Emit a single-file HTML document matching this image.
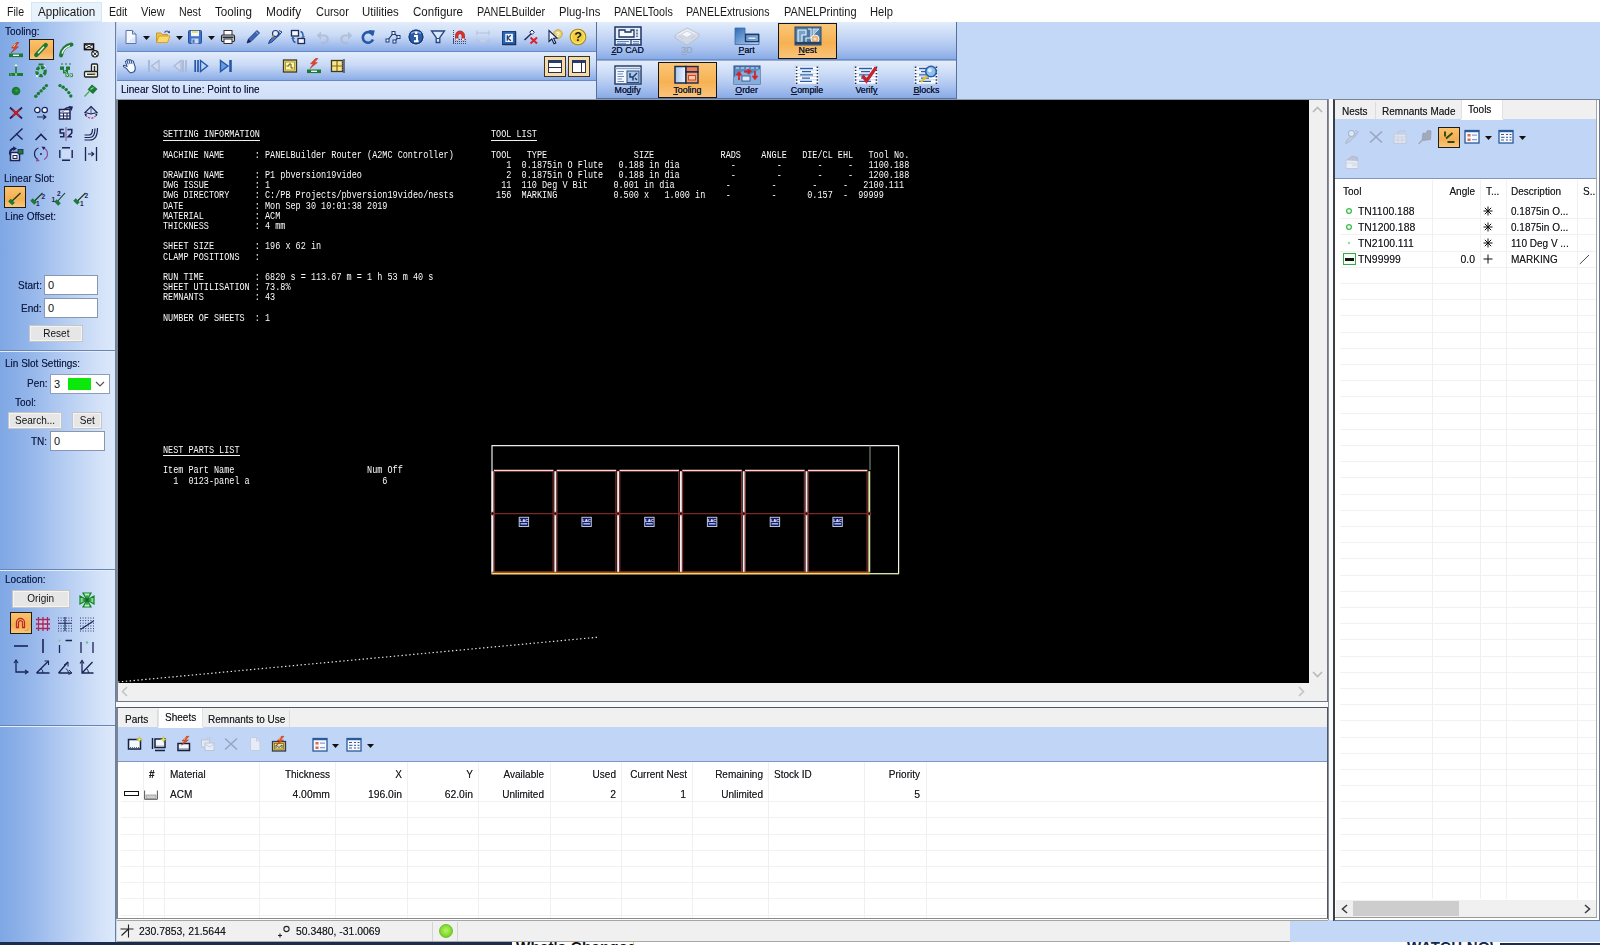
<!DOCTYPE html>
<html lang="en">
<head>
<meta charset="utf-8">
<title>PANELBuilder - Nest Tooling</title>
<style>
*{box-sizing:border-box;margin:0;padding:0}
html,body{width:1600px;height:945px;overflow:hidden}
body{position:relative;background:#c3d7f7;font-family:"Liberation Sans",sans-serif;font-size:11px;color:#0a0a0a}
.abs{position:absolute}
#menu{position:absolute;left:0;top:0;width:1600px;height:22px;background:#fff}
#menu span{position:absolute;transform-origin:0 50%;top:5.3px;font-size:12.2px;line-height:15px;color:#1a1a1a;white-space:nowrap}
#menu .hl{position:absolute;left:31px;top:2px;width:71px;height:20px;background:#e8f2fb;border:1px solid #d3e7f8}
#left{position:absolute;left:0;top:22px;width:116px;height:920px;background:linear-gradient(90deg,#7ea7e4 0%,#93b5ea 25%,#b4ccf2 55%,#d2e1f8 85%,#dde9fb 100%);border-right:1px solid #6d7f9f}
#left .hr{position:absolute;left:0;width:115px;height:2px;background:#6784b4;border-bottom:1px solid #e4edfb}
.lbl{position:absolute;font-size:11px;line-height:13px;color:#0d1b45;white-space:nowrap}
.tbrow{position:absolute;left:117px;width:480px;background:linear-gradient(180deg,#e2ecfb 0%,#cbdbf6 45%,#a3beed 80%,#8aace6 100%);border-bottom:1px solid #6688c4}
#canvas{position:absolute;left:118px;top:100px;width:1191px;height:583px;background:#000}
pre.cad{position:absolute;font-family:"Liberation Mono",monospace;font-size:10.5px;line-height:10.19px;color:#fafafa;white-space:pre;transform:scaleX(.8095);transform-origin:0 0}
.ul{position:absolute;height:1px;background:#f0f0f0}
.btn{position:absolute;background:#e6e6e6;border:1px solid #c6c6c6;text-align:center;font-size:11px;line-height:14px;color:#111;box-shadow:inset 0 0 0 1px #f4f4f4}
.inp{position:absolute;background:#fff;border:1px solid #8797b2;font-size:11px;line-height:18px;padding-left:3px;color:#111}
.sel{position:absolute;border:1px solid #1c1c1c;background:linear-gradient(180deg,#fbc36b,#f5ae52 60%,#f9c77c)}
.tabbar{position:absolute;background:#f0f0f0}
.tab{position:absolute;font-size:11px;line-height:13px;color:#1a1a1a;white-space:nowrap}
.grid{position:absolute;background:#fff}
.th,.td{position:absolute;font-size:11px;line-height:13px;color:#1a1a1a;white-space:nowrap}
.lbl,.tab,.th,.td{text-shadow:0 0 .4px rgba(10,15,40,.55);transform:scaleX(.91);transform-origin:0 50%}
.r{text-align:right;transform-origin:100% 50%}
.n{transform:scaleX(.945)}
.btn span{display:inline-block;transform:scaleX(.91)}
u{text-decoration:underline;text-underline-offset:1px}
svg{position:absolute;overflow:visible}
</style>
</head>
<body>
<div id="menu">
<div class="hl"></div>
<span style="left:7px;transform:scaleX(0.867)">File</span>
<span style="left:37.5px;transform:scaleX(0.960)">Application</span>
<span style="left:108.5px;transform:scaleX(0.871)">Edit</span>
<span style="left:141px;transform:scaleX(0.901)">View</span>
<span style="left:178.5px;transform:scaleX(0.873)">Nest</span>
<span style="left:215px;transform:scaleX(0.956)">Tooling</span>
<span style="left:266px;transform:scaleX(0.978)">Modify</span>
<span style="left:315.5px;transform:scaleX(0.896)">Cursor</span>
<span style="left:361.5px;transform:scaleX(0.936)">Utilities</span>
<span style="left:413px;transform:scaleX(0.945)">Configure</span>
<span style="left:476.5px;transform:scaleX(0.886)">PANELBuilder</span>
<span style="left:558.5px;transform:scaleX(0.924)">Plug-Ins</span>
<span style="left:613.5px;transform:scaleX(0.883)">PANELTools</span>
<span style="left:686px;transform:scaleX(0.870)">PANELExtrusions</span>
<span style="left:783.5px;transform:scaleX(0.902)">PANELPrinting</span>
<span style="left:870px;transform:scaleX(0.916)">Help</span>
</div>
<div id="left">
<div class="hr" style="top:328px"></div>
<div class="hr" style="top:547px"></div>
<div class="hr" style="top:703px"></div>
<div class="lbl" style="left:5px;top:3px">Tooling:</div>
<div class="sel" style="left:29px;top:17px;width:25px;height:21px"></div>
<div class="lbl" style="left:4px;top:150px">Linear Slot:</div>
<div class="sel" style="left:4px;top:164px;width:22px;height:22px"></div>
<div class="lbl" style="left:5px;top:188px">Line Offset:</div>
<div class="lbl" style="left:18px;top:257px">Start:</div>
<div class="inp" style="left:44px;top:253px;width:54px;height:20px">0</div>
<div class="lbl" style="left:21px;top:280px">End:</div>
<div class="inp" style="left:44px;top:276px;width:54px;height:20px">0</div>
<div class="btn" style="left:29px;top:303px;width:54px;height:17px"><span>Reset</span></div>
<div class="lbl" style="left:5px;top:335px">Lin Slot Settings:</div>
<div class="lbl" style="left:27px;top:355px">Pen:</div>
<div class="inp" style="left:50px;top:352px;width:60px;height:20px;border-color:#8e9db8">3<i class="abs" style="left:17px;top:3px;width:23px;height:12px;background:#0ce80c"></i>
<svg style="left:44px;top:6px" width="10" height="6" viewBox="0 0 10 6"><path d="M1 1 L5 5 L9 1" fill="none" stroke="#555" stroke-width="1.2"/></svg></div>
<div class="lbl" style="left:15px;top:374px">Tool:</div>
<div class="btn" style="left:8px;top:390px;width:54px;height:17px"><span>Search...</span></div>
<div class="btn" style="left:72px;top:390px;width:30px;height:17px"><span>Set</span></div>
<div class="lbl" style="left:31px;top:413px">TN:</div>
<div class="inp" style="left:50px;top:409px;width:55px;height:20px">0</div>
<div class="lbl" style="left:5px;top:551px">Location:</div>
<div class="btn" style="left:12px;top:568px;width:58px;height:18px"><span>Origin</span></div>
<div class="sel" style="left:10px;top:590px;width:22px;height:22px"></div>
</div>
<div class="tbrow" style="top:22px;height:30px"></div>
<div class="tbrow" style="top:52px;height:29px"></div>
<div class="abs" style="left:117px;top:81px;width:480px;height:19px;background:linear-gradient(180deg,#dbe6fa,#cfdef8)"></div>
<div class="lbl" style="left:121px;top:83px;font-size:11px;color:#0d1538">Linear Slot to Line: Point to line</div>
<div id="rtb" class="abs" style="left:596px;top:22px;width:361px;height:77px;border-left:1px solid #56709e;border-right:1px solid #56709e;border-bottom:1px solid #56709e;background:linear-gradient(180deg,#e2ecfb 0,#c9daf6 13px,#a6c0ee 28px,#88abe6 37px,#4f6fa8 38px,#e2ecfb 39px,#cbdbf6 52px,#a6c0ee 66px,#88abe6 76px)"></div>
<div class="abs" style="left:116px;top:99px;width:1212px;height:603px;background:#f0f0f0;border:1px solid #6f7788;border-top-color:#8f98aa;border-left:2px solid #7b8494"></div>
<div id="canvas"></div>
<svg style="left:1312px;top:106px" width="11" height="7" viewBox="0 0 11 7"><path d="M1 6 L5.5 1.5 L10 6" fill="none" stroke="#b9b9b9" stroke-width="1.6"/></svg>
<svg style="left:1312px;top:671px" width="11" height="7" viewBox="0 0 11 7"><path d="M1 1 L5.5 5.5 L10 1" fill="none" stroke="#b9b9b9" stroke-width="1.6"/></svg>
<svg style="left:121px;top:686px" width="7" height="11" viewBox="0 0 7 11"><path d="M6 1 L1.5 5.5 L6 10" fill="none" stroke="#c4c4c4" stroke-width="1.6"/></svg>
<svg style="left:1298px;top:686px" width="7" height="11" viewBox="0 0 7 11"><path d="M1 1 L5.5 5.5 L1 10" fill="none" stroke="#c4c4c4" stroke-width="1.6"/></svg>
<div class="abs" style="left:116px;top:702px;width:1212px;height:5px;background:#fafafa"></div>
<div class="abs" style="left:1328px;top:99px;width:6px;height:821px;background:#fafafa;border-left:1px solid #8a8f9a"></div>
<pre class="cad" style="left:163.1px;top:129.3px">SETTING INFORMATION

MACHINE NAME      : PANELBuilder Router (A2MC Controller)

DRAWING NAME      : P1 pbversion19video
DWG ISSUE         : 1
DWG DIRECTORY     : C:/PB Projects/pbversion19video/nests
DATE              : Mon Sep 30 10:01:38 2019
MATERIAL          : ACM
THICKNESS         : 4 mm

SHEET SIZE        : 196 x 62 in
CLAMP POSITIONS   :

RUN TIME          : 6820 s = 113.67 m = 1 h 53 m 40 s
SHEET UTILISATION : 73.8%
REMNANTS          : 43

NUMBER OF SHEETS  : 1












NEST PARTS LIST

Item Part Name                          Num Off
  1  0123-panel a                          6</pre>
<pre class="cad" style="left:491.2px;top:129.3px">TOOL LIST

TOOL   TYPE                 SIZE             RADS    ANGLE   DIE/CL EHL   Tool No.
   1  0.1875in O Flute   0.188 in dia          -        -       -     -   1100.188
   2  0.1875in O Flute   0.188 in dia          -        -       -     -   1200.188
  11  110 Deg V Bit     0.001 in dia          -        -       -     -   2100.111
 156  MARKING           0.500 x   1.000 in    -        -      0.157  -  99999</pre>
<div class="ul" style="left:163px;top:140px;width:97px"></div>
<div class="ul" style="left:491px;top:140px;width:46px"></div>
<div class="ul" style="left:163px;top:455px;width:77px"></div>
<svg style="left:118px;top:100px" width="1191" height="583" viewBox="118 100 1191 583">
<path d="M118 682 L598 637.2" stroke="#e8e8e8" stroke-width="1.2" stroke-dasharray="1.4 2.5" fill="none"/>
<path d="M492 573.5 V445.6 H898.6" stroke="#ececec" stroke-width="1.2" fill="none"/>
<path d="M898.6 445.6 V573.8" stroke="#f3f6dc" stroke-width="1.2" fill="none"/>
<path d="M870 445.6 V470" stroke="#7f8f7f" stroke-width="1.1" fill="none"/>
<rect x="494.2" y="471.4" width="58.9" height="100.6" fill="none" stroke="#8b3030" stroke-width="1.1"/>
<path d="M493.9 470.3 H553.4" stroke="#f1dcdc" stroke-width="1.3"/>
<rect x="557.0" y="471.4" width="58.9" height="100.6" fill="none" stroke="#8b3030" stroke-width="1.1"/>
<path d="M556.7 470.3 H616.2" stroke="#f1dcdc" stroke-width="1.3"/>
<rect x="619.8" y="471.4" width="58.9" height="100.6" fill="none" stroke="#8b3030" stroke-width="1.1"/>
<path d="M619.5 470.3 H679.0" stroke="#f1dcdc" stroke-width="1.3"/>
<rect x="682.6" y="471.4" width="58.9" height="100.6" fill="none" stroke="#8b3030" stroke-width="1.1"/>
<path d="M682.3 470.3 H741.8" stroke="#f1dcdc" stroke-width="1.3"/>
<rect x="745.4" y="471.4" width="58.9" height="100.6" fill="none" stroke="#8b3030" stroke-width="1.1"/>
<path d="M745.1 470.3 H804.6" stroke="#f1dcdc" stroke-width="1.3"/>
<rect x="808.2" y="471.4" width="58.9" height="100.6" fill="none" stroke="#8b3030" stroke-width="1.1"/>
<path d="M807.9 470.3 H867.4" stroke="#f1dcdc" stroke-width="1.3"/>
<path d="M492 513.6 H870" stroke="#7c2626" stroke-width="1.3"/>
<path d="M492.5 471.2 V572.4" stroke="#f6eeee" stroke-width="1.9"/>
<circle cx="492.5" cy="513.6" r="1.5" fill="#140404" stroke="#a83c3c" stroke-width=".8"/>
<path d="M555.3 471.2 V572.4" stroke="#f6eeee" stroke-width="1.9"/>
<circle cx="555.3" cy="513.6" r="1.5" fill="#140404" stroke="#a83c3c" stroke-width=".8"/>
<path d="M618.1 471.2 V572.4" stroke="#f6eeee" stroke-width="1.9"/>
<circle cx="618.1" cy="513.6" r="1.5" fill="#140404" stroke="#a83c3c" stroke-width=".8"/>
<path d="M680.9 471.2 V572.4" stroke="#f6eeee" stroke-width="1.9"/>
<circle cx="680.9" cy="513.6" r="1.5" fill="#140404" stroke="#a83c3c" stroke-width=".8"/>
<path d="M743.7 471.2 V572.4" stroke="#f6eeee" stroke-width="1.9"/>
<circle cx="743.7" cy="513.6" r="1.5" fill="#140404" stroke="#a83c3c" stroke-width=".8"/>
<path d="M806.5 471.2 V572.4" stroke="#f6eeee" stroke-width="1.9"/>
<circle cx="806.5" cy="513.6" r="1.5" fill="#140404" stroke="#a83c3c" stroke-width=".8"/>
<path d="M869.3 471.2 V572.4" stroke="#e4ecae" stroke-width="1.9"/>
<circle cx="869.3" cy="513.6" r="1.5" fill="#140404" stroke="#a83c3c" stroke-width=".8"/>
<path d="M491.5 572.3 H870" stroke="#b9601c" stroke-width="1"/>
<path d="M491.5 573.7 H870" stroke="#f6d673" stroke-width="1.5"/>
<path d="M870 573.7 H899" stroke="#e6efb0" stroke-width="1.3"/>
<rect x="519.2" y="517.3" width="9.4" height="9.2" fill="#0f1a70" stroke="#b9c6d2" stroke-width="1"/>
<text x="523.9" y="522" font-family="Liberation Sans,sans-serif" font-size="4.2" font-weight="bold" fill="#fff" text-anchor="middle">LAC</text>
<rect x="520.6" y="523.3" width="6.6" height="1.1" fill="#e8eefc"/>
<rect x="581.9" y="517.3" width="9.4" height="9.2" fill="#0f1a70" stroke="#b9c6d2" stroke-width="1"/>
<text x="586.6" y="522" font-family="Liberation Sans,sans-serif" font-size="4.2" font-weight="bold" fill="#fff" text-anchor="middle">LAC</text>
<rect x="583.4" y="523.3" width="6.6" height="1.1" fill="#e8eefc"/>
<rect x="644.7" y="517.3" width="9.4" height="9.2" fill="#0f1a70" stroke="#b9c6d2" stroke-width="1"/>
<text x="649.4" y="522" font-family="Liberation Sans,sans-serif" font-size="4.2" font-weight="bold" fill="#fff" text-anchor="middle">LAC</text>
<rect x="646.1" y="523.3" width="6.6" height="1.1" fill="#e8eefc"/>
<rect x="707.4" y="517.3" width="9.4" height="9.2" fill="#0f1a70" stroke="#b9c6d2" stroke-width="1"/>
<text x="712.1" y="522" font-family="Liberation Sans,sans-serif" font-size="4.2" font-weight="bold" fill="#fff" text-anchor="middle">LAC</text>
<rect x="708.9" y="523.3" width="6.6" height="1.1" fill="#e8eefc"/>
<rect x="770.2" y="517.3" width="9.4" height="9.2" fill="#0f1a70" stroke="#b9c6d2" stroke-width="1"/>
<text x="774.9" y="522" font-family="Liberation Sans,sans-serif" font-size="4.2" font-weight="bold" fill="#fff" text-anchor="middle">LAC</text>
<rect x="771.6" y="523.3" width="6.6" height="1.1" fill="#e8eefc"/>
<rect x="832.9" y="517.3" width="9.4" height="9.2" fill="#0f1a70" stroke="#b9c6d2" stroke-width="1"/>
<text x="837.6" y="522" font-family="Liberation Sans,sans-serif" font-size="4.2" font-weight="bold" fill="#fff" text-anchor="middle">LAC</text>
<rect x="834.4" y="523.3" width="6.6" height="1.1" fill="#e8eefc"/>
</svg>
<div class="abs" style="left:1333px;top:99px;width:267px;height:822px;background:#fff;border:1px solid #6a7a9a;border-top-color:#7c8494;border-left:2px solid #3b3f4a"></div>
<div class="tabbar" style="left:1335px;top:100px;width:262px;height:19px"></div>
<div class="abs" style="left:1375px;top:102px;width:1px;height:17px;background:#dcdcdc"></div>
<div class="abs" style="left:1461px;top:100px;width:42px;height:20px;background:#fff;border-left:1px solid #e2e2e2;border-right:1px solid #e2e2e2"></div>
<div class="tab" style="left:1342px;top:105px">Nests</div>
<div class="tab" style="left:1382px;top:105px">Remnants Made</div>
<div class="tab" style="left:1468px;top:103px">Tools</div>
<div class="abs" style="left:1335px;top:119px;width:262px;height:60px;background:#c1d5f7;border-bottom:1px solid #7f96c0"></div>
<div class="abs" style="left:1461px;top:119px;width:42px;height:1px;background:#fff"></div>
<div class="sel" style="left:1438px;top:127px;width:22px;height:21px"></div>
<div class="grid" id="rgrid" style="left:1336px;top:180px;width:261px;height:719px;
background-image:linear-gradient(#f0f0f0,#f0f0f0),linear-gradient(#f0f0f0,#f0f0f0),linear-gradient(#f0f0f0,#f0f0f0),linear-gradient(#f0f0f0,#f0f0f0),repeating-linear-gradient(180deg,transparent 0,transparent 15.2px,#f1f1f1 15.2px,#f1f1f1 16.2px);
background-size:1px 100%,1px 100%,1px 100%,1px 100%,256px 100%;
background-position:96px 0,144px 0,170px 0,241px 0,4px 22.6px;background-repeat:no-repeat"></div>
<div class="th" style="left:1343px;top:185px">Tool</div>
<div class="th r" style="left:1435px;top:185px;width:40px">Angle</div>
<div class="th" style="left:1486px;top:185px">T...</div>
<div class="th" style="left:1511px;top:185px">Description</div>
<div class="th" style="left:1583px;top:185px">S..</div>
<div class="td n" style="left:1358px;top:205px">TN1100.188</div>
<div class="td n" style="left:1358px;top:221px">TN1200.188</div>
<div class="td n" style="left:1358px;top:237px">TN2100.111</div>
<div class="td n" style="left:1358px;top:253px">TN99999</div>
<div class="td r n" style="left:1435px;top:253px;width:40px">0.0</div>
<div class="td" style="left:1511px;top:205px">0.1875in O...</div>
<div class="td" style="left:1511px;top:221px">0.1875in O...</div>
<div class="td" style="left:1511px;top:237px">110 Deg V ...</div>
<div class="td" style="left:1511px;top:253px">MARKING</div>
<div class="abs" style="left:1336px;top:900px;width:261px;height:17px;background:#f0f0f0"></div>
<div class="abs" style="left:1353px;top:901px;width:106px;height:15px;background:#cdcdcd"></div>
<svg style="left:1341px;top:903.5px" width="7" height="10" viewBox="0 0 7 10"><path d="M6 1 L1.5 5 L6 9" fill="none" stroke="#404040" stroke-width="1.6"/></svg>
<svg style="left:1584px;top:903.5px" width="7" height="10" viewBox="0 0 7 10"><path d="M1 1 L5.5 5 L1 9" fill="none" stroke="#404040" stroke-width="1.6"/></svg>
<div class="abs" style="left:1335px;top:100px;width:262px;height:818px;border-right:1px solid #a6a6a6;border-bottom:1px solid #9a9a9a"></div>
<div class="abs" style="left:116px;top:707px;width:1212px;height:212px;background:#fff;border:1px solid #4f5666;border-left:2px solid #7b8494;border-bottom:1px solid #8a8a8a"></div>
<div class="tabbar" style="left:118px;top:708px;width:1209px;height:19px"></div>
<div class="abs" style="left:157px;top:710px;width:1px;height:17px;background:#dcdcdc"></div>
<div class="abs" style="left:158px;top:708px;width:45px;height:20px;background:#fff;border-left:1px solid #e2e2e2;border-right:1px solid #e2e2e2"></div>
<div class="abs" style="left:289px;top:710px;width:1px;height:17px;background:#dcdcdc"></div>
<div class="tab" style="left:125px;top:713px">Parts</div>
<div class="tab" style="left:165px;top:711px">Sheets</div>
<div class="tab" style="left:207.5px;top:713px">Remnants to Use</div>
<div class="abs" style="left:118px;top:727px;width:1209px;height:35px;background:#c1d5f7;border-bottom:1px solid #7f96c0"></div>
<div class="abs" style="left:158px;top:727px;width:45px;height:1px;background:#fff"></div>
<div class="grid" id="bgrid" style="left:118px;top:762px;width:1209px;height:156px;
background-image:linear-gradient(#f0f0f0,#f0f0f0),linear-gradient(#f0f0f0,#f0f0f0),linear-gradient(#f0f0f0,#f0f0f0),linear-gradient(#f0f0f0,#f0f0f0),linear-gradient(#f0f0f0,#f0f0f0),linear-gradient(#f0f0f0,#f0f0f0),linear-gradient(#f0f0f0,#f0f0f0),linear-gradient(#f0f0f0,#f0f0f0),linear-gradient(#f0f0f0,#f0f0f0),linear-gradient(#f0f0f0,#f0f0f0),linear-gradient(#f0f0f0,#f0f0f0),linear-gradient(#f0f0f0,#f0f0f0),repeating-linear-gradient(180deg,transparent 0,transparent 15.2px,#f1f1f1 15.2px,#f1f1f1 16.2px);
background-size:1px 100%,1px 100%,1px 100%,1px 100%,1px 100%,1px 100%,1px 100%,1px 100%,1px 100%,1px 100%,1px 100%,1px 100%,1205px 100%;
background-position:25px 0,46px 0,141px 0,217px 0,289px 0,360px 0,432px 0,503px 0,574px 0,650px 0,746px 0,808px 0,3px 23.6px;background-repeat:no-repeat"></div>
<div class="th" style="left:149px;top:768px;font-weight:bold">#</div>
<div class="th" style="left:169.5px;top:768px">Material</div>
<div class="th r" style="left:270px;top:768px;width:60px">Thickness</div>
<div class="th r" style="left:372px;top:768px;width:30px">X</div>
<div class="th r" style="left:443px;top:768px;width:30px">Y</div>
<div class="th r" style="left:484px;top:768px;width:60px">Available</div>
<div class="th r" style="left:575.5px;top:768px;width:40px">Used</div>
<div class="th r" style="left:617px;top:768px;width:70px">Current Nest</div>
<div class="th r" style="left:703px;top:768px;width:60px">Remaining</div>
<div class="th" style="left:774px;top:768px">Stock ID</div>
<div class="th r" style="left:860px;top:768px;width:60px">Priority</div>
<div class="td" style="left:169.5px;top:788px">ACM</div>
<div class="td r n" style="left:270px;top:788px;width:60px">4.00mm</div>
<div class="td r n" style="left:342px;top:788px;width:60px">196.0in</div>
<div class="td r n" style="left:413px;top:788px;width:60px">62.0in</div>
<div class="td r" style="left:484px;top:788px;width:60px">Unlimited</div>
<div class="td r n" style="left:575.5px;top:788px;width:40px">2</div>
<div class="td r n" style="left:646px;top:788px;width:40px">1</div>
<div class="td r" style="left:703px;top:788px;width:60px">Unlimited</div>
<div class="td r n" style="left:880px;top:788px;width:40px">5</div>
<div class="abs" style="left:117px;top:919px;width:1211px;height:2px;background:#fdfdfd;border-bottom:1px solid #a6a6a6"></div>
<div class="abs" style="left:117px;top:921px;width:1173px;height:21px;background:#f0f0f0;border-bottom:1px solid #a9a9a9"></div>
<div class="abs" style="left:432px;top:922px;width:1px;height:19px;background:#d4d4d4"></div>
<div class="abs" style="left:457px;top:922px;width:1px;height:19px;background:#d4d4d4"></div>
<div class="td n" style="left:138.5px;top:925px">230.7853, 21.5644</div>
<div class="td n" style="left:295.5px;top:925px">50.3480, -31.0069</div>
<div class="abs" style="left:439px;top:924px;width:14px;height:14px;border-radius:50%;background:radial-gradient(circle at 50% 45%,#b9f06a 0,#8fe23c 45%,#58b81e 100%);border:1px solid #6fc22a"></div>
<div class="abs" style="left:0;top:942px;width:512px;height:3px;background:#1b2c4c"></div>
<div class="abs" style="left:512px;top:942px;width:1088px;height:3px;background:#fff"></div>
<div class="abs" style="left:1500px;top:942.6px;width:100px;height:3px;background:#1b2c4c"></div>
<div class="abs" style="left:516px;top:941.6px;width:118px;height:3.4px;overflow:hidden;background:#fff"><div style="font:bold 15px/15px 'Liberation Sans',sans-serif;color:#111;margin-top:-2.4px;white-space:nowrap;letter-spacing:.3px">What's Changed</div></div>
<div class="abs" style="left:1407px;top:941.6px;width:86px;height:3.4px;overflow:hidden;background:#fff"><div style="font:bold 15px/15px 'Liberation Sans',sans-serif;color:#14284a;margin-top:-2.4px;white-space:nowrap;letter-spacing:.3px">WATCH NOW</div></div>
<svg style="left:8.0px;top:41.5px" width="16" height="16" viewBox="0 0 16 16"><path d="M8.5 0.5 L3.5 6 L6.5 6 L3 11 L10.5 4.8 L7.3 4.8 L11 0.5 Z" fill="#e8442a" stroke="#b3261a" stroke-width=".5"/><path d="M7.5 2 L5.5 5" stroke="#ffd24a" stroke-width="1"/><rect x="1" y="11.5" width="14" height="3.6" fill="#1b7a33"/><rect x="5" y="12.6" width="6" height="1.4" fill="#e9fbe9"/></svg>
<svg style="left:33.0px;top:41.5px" width="16" height="16" viewBox="0 0 16 16"><path d="M3.2 13 L12.8 3" stroke="#1b7a33" stroke-width="4.2" stroke-linecap="round"/><path d="M5 11.2 L11 4.8" stroke="#fff6d8" stroke-width="1.4"/></svg>
<svg style="left:58.0px;top:41.5px" width="16" height="16" viewBox="0 0 16 16"><path d="M3 13.5 C3.5 8 7.5 3.5 13.5 2.5" stroke="#1b7a33" stroke-width="4" fill="none" stroke-linecap="round"/><path d="M4 11.5 C5 8 8 5 12 3.6" stroke="#f3fbf3" stroke-width="1.3" fill="none"/></svg>
<svg style="left:82.5px;top:41.5px" width="16" height="16" viewBox="0 0 16 16"><rect x="1.5" y="2" width="9" height="5.6" fill="#fff" stroke="#111" stroke-width="1.6"/><path d="M2 2.5 L10 7 M10 2.5 L2 7" stroke="#111" stroke-width=".9"/><circle cx="12" cy="11.8" r="3.2" fill="#fff" stroke="#111" stroke-width="1.1"/><path d="M10.2 10 L13.8 13.6 M13.8 10 L10.2 13.6" stroke="#111" stroke-width="1"/></svg>
<svg style="left:8.0px;top:62.5px" width="16" height="16" viewBox="0 0 16 16"><rect x="1" y="10" width="14" height="3" fill="#1b7a33"/><path d="M8 2 V12" stroke="#1b7a33" stroke-width="1.6"/><path d="M8 1 V4 M6.7 2.5 H9.3" stroke="#fff" stroke-width=".8"/><path d="M7.2 10.4 L8.8 12.6 M8.8 10.4 L7.2 12.6" stroke="#eaffea" stroke-width=".8"/><path d="M2.2 10.8 L3.8 12.4" stroke="#bfe8bf" stroke-width=".7"/></svg>
<svg style="left:33.0px;top:62.5px" width="16" height="16" viewBox="0 0 16 16"><circle cx="8" cy="8.5" r="4.2" fill="none" stroke="#1b7a33" stroke-width="3.2" stroke-dasharray="3.4 1.4"/><circle cx="8" cy="8.5" r="1.6" fill="#7fdc8c"/><path d="M3 12 L5 14 M5 12 L3 14 M11 2 L13 4" stroke="#eaffea" stroke-width=".8"/><rect x="5.5" y="0.5" width="5" height="2" fill="#1b7a33"/></svg>
<svg style="left:58.0px;top:62.5px" width="16" height="16" viewBox="0 0 16 16"><g fill="#1b7a33"><rect x="2" y="3.5" width="4" height="3.4"/><rect x="8" y="3.5" width="4" height="3.4"/><rect x="5" y="7" width="5" height="3.4"/><rect x="7.5" y="10.5" width="3.6" height="3.6"/><rect x="11.8" y="10.5" width="3.2" height="3.6"/></g><path d="M3 1 H5 M7 1 H9 M11 1 H13" stroke="#1b7a33" stroke-width="1"/><path d="M8.2 11 L10.4 13.6 M10.4 11 L8.2 13.6 M12.3 11 L14.3 13.6 M14.3 11 L12.3 13.6" stroke="#eaffea" stroke-width=".8"/><path d="M6 7.6 L9 9.8" stroke="#9fe6a8" stroke-width=".9"/></svg>
<svg style="left:82.5px;top:62.5px" width="16" height="16" viewBox="0 0 16 16"><rect x="8.5" y="1" width="6" height="8" rx="1" fill="#fdfdf0" stroke="#222" stroke-width="1.3"/><rect x="1.5" y="8.5" width="13" height="5.5" rx="1" fill="#fdfdf0" stroke="#222" stroke-width="1.3"/><path d="M11.5 3 V8" stroke="#333" stroke-width="1.5"/><path d="M4 11.3 H11.5" stroke="#333" stroke-width="1.4"/><circle cx="11.5" cy="11.3" r="1" fill="#7a6a20"/></svg>
<svg style="left:8.0px;top:83.0px" width="16" height="16" viewBox="0 0 16 16"><circle cx="8" cy="8" r="4.3" fill="#1b7a33"/><circle cx="8.6" cy="7.4" r="1.5" fill="#2f9a45"/></svg>
<svg style="left:33.0px;top:83.0px" width="16" height="16" viewBox="0 0 16 16"><g fill="#1b7a33"><circle cx="2.8" cy="13.2" r="1.7"/><circle cx="5.4" cy="10.5" r="1.7"/><circle cx="8.1" cy="7.9" r="1.7"/><circle cx="10.8" cy="5.2" r="1.7"/><circle cx="13.4" cy="2.6" r="1.7"/></g></svg>
<svg style="left:58.0px;top:83.0px" width="16" height="16" viewBox="0 0 16 16"><g fill="#1b7a33"><circle cx="2.0" cy="2.6" r="1.7"/><circle cx="5.2" cy="4.2" r="1.7"/><circle cx="8.2" cy="6.6" r="1.7"/><circle cx="10.8" cy="9.6" r="1.7"/><circle cx="12.8" cy="13.0" r="1.7"/></g></svg>
<svg style="left:82.5px;top:83.0px" width="16" height="16" viewBox="0 0 16 16"><path d="M9 1.5 L14.5 6 L10 11 L4.5 6.5 Z" fill="#1b7a33"/><path d="M7.5 6.5 L10.5 4.5" stroke="#8fe08f" stroke-width="1.2"/><path d="M6.2 8.5 L1.5 13.5" stroke="#3fae4a" stroke-width="1.2"/></svg>
<svg style="left:8.0px;top:105.0px" width="16" height="16" viewBox="0 0 16 16"><path d="M2 2.5 L14 13.5 M14 2.5 L2 13.5" stroke="#1b2455" stroke-width="1.7"/><path d="M4.5 4.8 L11.5 11.2 M11.5 4.8 L4.5 11.2" stroke="#c01f2a" stroke-width="1.9"/></svg>
<svg style="left:33.0px;top:105.0px" width="16" height="16" viewBox="0 0 16 16"><circle cx="4.3" cy="5" r="2.7" fill="#eef6ff" stroke="#1b2455" stroke-width="1.2"/><circle cx="11.7" cy="5" r="2.7" fill="#eef6ff" stroke="#1b2455" stroke-width="1.2"/><path d="M4 12 H12.5 M10 9.8 L12.8 12 L10 14.2" stroke="#1b2455" stroke-width="1.2" fill="none"/></svg>
<svg style="left:58.0px;top:105.0px" width="16" height="16" viewBox="0 0 16 16"><rect x="1.5" y="4.5" width="10.5" height="9.5" fill="#f4f7ff" stroke="#1b2455" stroke-width="1.5"/><path d="M2 8 H12 M2 11 H12 M5.5 8 V14 M9 8 V14" stroke="#1b2455" stroke-width="1.1"/><path d="M6 5 Q9 1.5 13 3" stroke="#1b2455" stroke-width="1.6" fill="none"/><path d="M10.5 1 L15 1.5 L13.5 6 Z" fill="#1b2455"/><path d="M3.5 6.2 L6 6.2" stroke="#8a90b0" stroke-width="1.2"/></svg>
<svg style="left:82.5px;top:105.0px" width="16" height="16" viewBox="0 0 16 16"><path d="M8 1.5 L14 7.5 L8 9 L2 7.5 Z" fill="none" stroke="#1b2455" stroke-width="1.1"/><path d="M8 1.5 V9" stroke="#1b2455" stroke-width=".7"/><path d="M2.5 10 Q8 16.5 13.5 10" stroke="#b04a7a" stroke-width="1.2" fill="none" stroke-dasharray="2.2 1.2"/><path d="M1.5 8.5 L4 9 L2.2 11.2 Z M14.5 8.5 L12 9 L13.8 11.2 Z" fill="#1b2455"/></svg>
<svg style="left:8.0px;top:125.5px" width="16" height="16" viewBox="0 0 16 16"><path d="M1.5 1.5 L8 7.5" stroke="#9aa3c8" stroke-width=".9"/><path d="M14.5 2.5 L2 14.5 M8 7.5 L14.5 13.5" stroke="#1b2455" stroke-width="1.4"/></svg>
<svg style="left:33.0px;top:125.5px" width="16" height="16" viewBox="0 0 16 16"><path d="M3.5 3 L8 8 L12.5 3" stroke="#9aa3c8" stroke-width=".9" fill="none"/><path d="M2.5 14 L8 8.5 L13.5 14" stroke="#1b2455" stroke-width="1.6" fill="none"/></svg>
<svg style="left:58.0px;top:125.5px" width="16" height="16" viewBox="0 0 16 16"><path d="M8 1 V15" stroke="#8a6aa0" stroke-width="1.2"/><path d="M5.8 3.5 H2.2 V7 H5.8 V10.8 H2" stroke="#1b2455" stroke-width="1.5" fill="none"/><path d="M10.2 4.4 V3.5 H13.8 V7 L10.2 10.8 H14" stroke="#1b2455" stroke-width="1.5" fill="none"/></svg>
<svg style="left:82.5px;top:125.5px" width="16" height="16" viewBox="0 0 16 16"><path d="M1.5 14 H7 Q14.5 14 14.5 2 M1.5 11.5 H6.5 Q12 11.5 12 2.5 M1.5 9 H6 Q9.5 9 9.5 3" stroke="#1b2455" stroke-width="1.15" fill="none"/></svg>
<svg style="left:8.0px;top:146.0px" width="16" height="16" viewBox="0 0 16 16"><rect x="2.5" y="6.5" width="9" height="8" fill="#f4f7ff" stroke="#1b2455" stroke-width="1.5"/><rect x="5" y="9.5" width="4" height="3" fill="none" stroke="#1b2455" stroke-width="1"/><path d="M2.5 9 Q0.5 4 6 2.2" stroke="#1b2455" stroke-width="2" fill="none"/><path d="M5 0.2 L9 2.4 L5.4 5 Z" fill="#1b2455"/><rect x="10" y="3.5" width="5" height="4.5" fill="#1b7a33" stroke="#1b2455" stroke-width=".8"/></svg>
<svg style="left:33.0px;top:146.0px" width="16" height="16" viewBox="0 0 16 16"><path d="M5.5 2 A6.3 6.3 0 0 0 5 13.5" stroke="#1b2455" stroke-width="1.2" fill="none"/><path d="M10.5 2 A6.3 6.3 0 0 1 11 13.5" stroke="#8a4a9a" stroke-width="1.2" fill="none"/><path d="M8.5 0.5 L12.5 1 L10.5 4 Z" fill="#1b2455"/><path d="M3.5 12 L7 15 L3 15.5 Z" fill="#8a4a9a"/><circle cx="8" cy="8" r="1" fill="#1b2455"/></svg>
<svg style="left:58.0px;top:146.0px" width="16" height="16" viewBox="0 0 16 16"><path d="M4 1.8 H12 M4 14.2 H12 M1.8 4 V12 M14.2 4 V12" stroke="#1b2455" stroke-width="1.4"/><rect x="3.5" y="3.5" width="9" height="9" fill="#dfe9fb" opacity=".55"/></svg>
<svg style="left:82.5px;top:146.0px" width="16" height="16" viewBox="0 0 16 16"><path d="M2.5 1 V15 M13.5 1 V15" stroke="#1b2455" stroke-width="1.3"/><path d="M5 8 H10.5 M8.3 5.8 L10.8 8 L8.3 10.2" stroke="#1b2455" stroke-width="1.1" fill="none"/></svg>
<svg style="left:7.0px;top:189.5px" width="16" height="16" viewBox="0 0 16 16"><path d="M3 13 L13.5 3" stroke="#173a1c" stroke-width="1.3"/><path d="M2.5 10 L6.5 14" stroke="#1b7a33" stroke-width="3.8"/></svg>
<svg style="left:30.0px;top:189.5px" width="16" height="16" viewBox="0 0 16 16"><path d="M3 12.5 L12.5 3" stroke="#173a1c" stroke-width="1.1"/><path d="M1.5 9.5 L5.5 13.5" stroke="#1b7a33" stroke-width="3.6"/><text x="6" y="15.5" font-family="Liberation Sans,sans-serif" font-size="6.5" font-weight="bold" fill="#1b2455">1</text><text x="11.5" y="8.5" font-family="Liberation Sans,sans-serif" font-size="6.5" font-weight="bold" fill="#1b2455">2</text></svg>
<svg style="left:51.0px;top:189.5px" width="16" height="16" viewBox="0 0 16 16"><path d="M5 13 L14 3" stroke="#173a1c" stroke-width="1.1"/><path d="M4.5 10.5 L8.5 14.5" stroke="#1b7a33" stroke-width="3.6"/><text x="0.5" y="12" font-family="Liberation Sans,sans-serif" font-size="6.5" font-weight="bold" fill="#1b2455">1</text><text x="6" y="5.5" font-family="Liberation Sans,sans-serif" font-size="6.5" font-weight="bold" fill="#1b2455">2</text></svg>
<svg style="left:73.0px;top:189.5px" width="16" height="16" viewBox="0 0 16 16"><path d="M3 12.5 L12.5 3" stroke="#173a1c" stroke-width="1.1"/><path d="M1.5 9.5 L5.5 13.5" stroke="#1b7a33" stroke-width="3.6"/><text x="7" y="15.5" font-family="Liberation Sans,sans-serif" font-size="6.5" font-weight="bold" fill="#1b2455">1</text><text x="11.5" y="8" font-family="Liberation Sans,sans-serif" font-size="6.5" font-weight="bold" fill="#1b2455">2</text></svg>
<svg style="left:78.0px;top:590.5px" width="18" height="18" viewBox="0 0 18 18"><path d="M9 9 L5 2 H13 Z M9 9 L5 16 H13 Z M9 9 L2 5 V13 Z M9 9 L16 5 V13 Z" fill="#7fe08a" stroke="#14802a" stroke-width="1.2"/><path d="M9 4.5 V13.5 M4.5 9 H13.5" stroke="#0d5a20" stroke-width="1"/><path d="M7 3.2 H11 M7 14.8 H11" stroke="#eaffea" stroke-width=".8"/></svg>
<svg style="left:13.0px;top:615.5px" width="16" height="16" viewBox="0 0 16 16"><path d="M3.5 11.5 V6.5 A4 4 0 0 1 11.5 6.5 V11.5 H9.6 V6.7 A2.1 2.1 0 0 0 5.4 6.7 V11.5 Z" fill="#f6d9a0" stroke="#c0281a" stroke-width="1.3"/><path d="M11.5 14.5 H15 V12" stroke="#c9a24a" stroke-width=".9" fill="none"/></svg>
<svg style="left:35.0px;top:615.5px" width="16" height="16" viewBox="0 0 16 16"><rect x="2" y="2" width="12" height="12" fill="#f3c9dc" opacity=".6"/><path d="M1 3.5 H15 M1 8 H15 M1 12.5 H15 M3.5 1 V15 M8 1 V15 M12.5 1 V15" stroke="#9a2a68" stroke-width="1.3"/></svg>
<svg style="left:57.0px;top:615.5px" width="16" height="16" viewBox="0 0 16 16"><g stroke="#2a3a70" stroke-width="1" stroke-dasharray="1 1.6"><path d="M1 2 H15 M1 4.6 H15 M1 10 H15 M1 12.6 H15 M1 15 H15"/></g><path d="M8 1 V15 M1 7.3 H15" stroke="#1b2455" stroke-width="1.1"/></svg>
<svg style="left:79.0px;top:615.5px" width="16" height="16" viewBox="0 0 16 16"><g stroke="#2a3a70" stroke-width="1" stroke-dasharray="1 1.6"><path d="M1 2 H15 M1 4.6 H15 M1 7.2 H15 M1 10 H15 M1 12.6 H15 M1 15 H15"/></g><path d="M1.5 13.5 L14.5 5" stroke="#1b2455" stroke-width="1.2"/></svg>
<svg style="left:13.0px;top:637.5px" width="16" height="16" viewBox="0 0 16 16"><path d="M1 8 H15" stroke="#1b2455" stroke-width="1.6"/></svg>
<svg style="left:35.0px;top:637.5px" width="16" height="16" viewBox="0 0 16 16"><path d="M8 1 V15" stroke="#1b2455" stroke-width="1.6"/></svg>
<svg style="left:57.0px;top:637.5px" width="16" height="16" viewBox="0 0 16 16"><path d="M8.5 2.5 H15 M2.5 7 V15" stroke="#1b2455" stroke-width="1.3"/><circle cx="2.5" cy="2.5" r="1" fill="#7fbf8f"/></svg>
<svg style="left:79.0px;top:637.5px" width="16" height="16" viewBox="0 0 16 16"><path d="M2 4 V15 M14 4 V15" stroke="#1b2455" stroke-width="1.3"/><circle cx="8" cy="4.5" r="1.2" fill="#6fbf9f"/></svg>
<svg style="left:13.0px;top:659.0px" width="16" height="16" viewBox="0 0 16 16"><path d="M3 1.5 V13 H14.5" stroke="#1b2455" stroke-width="1.3" fill="none"/><path d="M1 4 L3 1 L5 4 M12 11 L15 13 L12 15" stroke="#1b2455" stroke-width="1.1" fill="none"/></svg>
<svg style="left:35.0px;top:659.0px" width="16" height="16" viewBox="0 0 16 16"><path d="M1.5 14 H14.5 M1.5 14 L13 2.5" stroke="#1b2455" stroke-width="1.3" fill="none"/><path d="M9.5 2 H13.5 V6" stroke="#1b2455" stroke-width="1.1" fill="none"/><path d="M8 14 A6 6 0 0 0 6 9.5" stroke="#1b2455" stroke-width="1" fill="none"/></svg>
<svg style="left:57.0px;top:659.0px" width="16" height="16" viewBox="0 0 16 16"><path d="M1.5 14 H14.5 M1.5 14 L11 3" stroke="#1b2455" stroke-width="1.3" fill="none"/><path d="M9 9.5 A7 7 0 0 1 11.5 14" stroke="#1b2455" stroke-width="1" fill="none"/><path d="M12 11 L14.8 14 L11.5 15.5" stroke="#1b2455" stroke-width="1" fill="none"/><path d="M7 6 L11 3 L11 7.5" stroke="#1b2455" stroke-width="1" fill="none"/></svg>
<svg style="left:79.0px;top:659.0px" width="16" height="16" viewBox="0 0 16 16"><path d="M3 1.5 V14 H14.5 M3 14 L13.5 3" stroke="#1b2455" stroke-width="1.3" fill="none"/><path d="M1 4.5 L3 1.5 L5 4.5" stroke="#1b2455" stroke-width="1.1" fill="none"/><path d="M9.5 14 A6.5 6.5 0 0 0 7.7 9.6" stroke="#1b2455" stroke-width="1" fill="none"/></svg>
<svg style="left:122.5px;top:29.2px" width="16" height="16" viewBox="0 0 16 16"><path d="M3 1.5 H9.5 L13 5 V14.5 H3 Z" fill="#f4f8ff" stroke="#5a72a8" stroke-width="1"/><path d="M9.5 1.5 V5 H13" fill="#cfdcf5" stroke="#5a72a8" stroke-width="1"/><path d="M4 13.5 H12 V8 Z" fill="#dbe6fa"/></svg>
<svg style="left:143.0px;top:36.2px" width="7" height="4" viewBox="0 0 7 4"><path d="M0 0 H7 L3.5 4 Z" fill="#111"/></svg>
<svg style="left:154.5px;top:29.2px" width="16" height="16" viewBox="0 0 16 16"><path d="M1.5 13.5 V4 H6 L7.5 5.5 H12.5 V7" fill="#f0c24a" stroke="#c8962a" stroke-width="1"/><path d="M1.5 13.5 L4 7 H15 L12.5 13.5 Z" fill="#fbd96a" stroke="#d1a030" stroke-width="1"/><path d="M9.5 3.5 Q12 0.5 14 3.5" stroke="#2a4a90" stroke-width="1.2" fill="none"/><path d="M12.5 3.8 L15 4.2 L14.6 1.6 Z" fill="#2a4a90"/></svg>
<svg style="left:175.8px;top:36.2px" width="7" height="4" viewBox="0 0 7 4"><path d="M0 0 H7 L3.5 4 Z" fill="#111"/></svg>
<svg style="left:187.0px;top:29.2px" width="16" height="16" viewBox="0 0 16 16"><rect x="1.5" y="1.5" width="13" height="13" rx="1" fill="#3f73c8" stroke="#2a4f98" stroke-width="1"/><rect x="4" y="1.8" width="8" height="5.4" fill="#f3f6fc"/><rect x="5" y="2" width="6" height="2" fill="#e8e070"/><rect x="4.5" y="9.5" width="7" height="5" fill="#cdd9ee"/><rect x="5.5" y="10.5" width="2" height="3.4" fill="#3f73c8"/></svg>
<svg style="left:207.8px;top:36.2px" width="7" height="4" viewBox="0 0 7 4"><path d="M0 0 H7 L3.5 4 Z" fill="#111"/></svg>
<svg style="left:219.8px;top:29.2px" width="16" height="16" viewBox="0 0 16 16"><rect x="4" y="1.5" width="8" height="5" fill="#fff" stroke="#333" stroke-width="1"/><rect x="1.5" y="6" width="13" height="6.5" rx="1.2" fill="#d8dde8" stroke="#222" stroke-width="1.1"/><rect x="4" y="10" width="8" height="4.5" fill="#fff" stroke="#333" stroke-width="1"/><rect x="2.5" y="7.5" width="11" height="1.6" fill="#2a2f3a"/></svg>
<svg style="left:244.5px;top:29.2px" width="16" height="16" viewBox="0 0 16 16"><path d="M2 14 L3.5 10 L12 1.5 L14.5 4 L6 12.5 Z" fill="#3a68b8" stroke="#1d3a7a" stroke-width=".9"/><path d="M2 14 L3.5 10 L6 12.5 Z" fill="#1d2a4a"/><path d="M11 2.8 L13.3 5" stroke="#9ab8ea" stroke-width="1"/></svg>
<svg style="left:266.6px;top:29.2px" width="16" height="16" viewBox="0 0 16 16"><path d="M1.5 14.5 L3 11 L11.5 3 L13.5 5 L5 13 Z" fill="#4a78c8" stroke="#1d3a7a" stroke-width=".9"/><circle cx="8.5" cy="4.5" r="3" fill="#e4eefc" stroke="#1d3a7a" stroke-width="1.1"/><path d="M12 1.5 L15 3 L13 5" stroke="#1d3a7a" stroke-width="1" fill="none"/><path d="M4.5 8.5 L7 6.5" stroke="#d8a020" stroke-width="1.4"/></svg>
<svg style="left:290.2px;top:29.2px" width="16" height="16" viewBox="0 0 16 16"><rect x="1.5" y="1.5" width="7" height="5.5" fill="#f4f8ff" stroke="#1d2a5a" stroke-width="1.3"/><rect x="8" y="9.5" width="6.5" height="5" fill="#f4f8ff" stroke="#1d2a5a" stroke-width="1.3"/><path d="M10.5 2.5 Q13.5 3.5 13 7.5" stroke="#2a5aa8" stroke-width="1.4" fill="none"/><path d="M11 8 L13.2 9.2 L15 6.8 Z" fill="#2a5aa8"/><path d="M5.5 13.5 Q2.5 12.5 3 9" stroke="#2a5aa8" stroke-width="1.4" fill="none"/><path d="M1 9.8 L3 7.5 L5 9.8 Z" fill="#2a5aa8"/></svg>
<svg style="left:315.4px;top:29.2px" width="16" height="16" viewBox="0 0 16 16" opacity=".75"><path d="M4 6.5 H9.5 A3.8 3.8 0 0 1 9.5 14 H6" stroke="#aeb8cc" stroke-width="2.2" fill="none"/><path d="M1.5 6.5 L6 2.5 V10.5 Z" fill="#aeb8cc"/></svg>
<svg style="left:338.3px;top:29.2px" width="16" height="16" viewBox="0 0 16 16" opacity=".75"><path d="M12 6.5 H6.5 A3.8 3.8 0 0 0 6.5 14 H10" stroke="#aeb8cc" stroke-width="2.2" fill="none"/><path d="M14.5 6.5 L10 2.5 V10.5 Z" fill="#aeb8cc"/></svg>
<svg style="left:360.0px;top:29.2px" width="16" height="16" viewBox="0 0 16 16"><path d="M12.8 6 A5.3 5.3 0 1 0 13 10.5" stroke="#2458a8" stroke-width="2.6" fill="none"/><path d="M8.5 1 L14.8 1.5 L13 7.5 Z" fill="#2458a8"/></svg>
<svg style="left:384.5px;top:29.2px" width="16" height="16" viewBox="0 0 16 16"><path d="M2.5 11.5 L8.5 4 L13.5 8 L9.5 12.5" stroke="#1d2a5a" stroke-width="1.1" fill="none"/><g fill="#eef4ff" stroke="#1d3a7a" stroke-width="1"><rect x="1" y="10" width="3" height="3"/><rect x="7" y="2.5" width="3" height="3"/><rect x="12" y="6.5" width="3" height="3"/><rect x="8" y="11" width="3" height="3"/></g></svg>
<svg style="left:406.8px;top:28.2px" width="18" height="18" viewBox="0 0 18 18"><circle cx="9" cy="9" r="8" fill="#2a5aa8" stroke="#d4dff2" stroke-width="1"/><circle cx="9" cy="9" r="6.9" fill="none" stroke="#183a78" stroke-width="1.2"/><path d="M4 5.5 Q9 1.8 14 5.5" stroke="#8fb0e6" stroke-width="1.3" fill="none"/><path d="M7 8 H10 V13.3 H11.6 M7 13.3 H11.6" stroke="#fff" stroke-width="1.9" fill="none"/><circle cx="9.2" cy="4.8" r="1.4" fill="#fff"/></svg>
<svg style="left:430.0px;top:29.2px" width="16" height="16" viewBox="0 0 16 16"><path d="M1.5 2 H14.5 L9.8 8.5 V13.5 H6.2 V8.5 Z" fill="#dbe8fb" stroke="#27477f" stroke-width="1.3"/><path d="M6.5 9.5 H9.5" stroke="#27477f" stroke-width="1"/></svg>
<svg style="left:451.6px;top:29.2px" width="16" height="16" viewBox="0 0 16 16"><g stroke="#3a4a7a" stroke-width="1" stroke-dasharray="1 1"><path d="M1 12.5 H15 M1 14.5 H15 M1 10.5 H15"/><path d="M1.5 1 V15" /></g><path d="M3.5 11 V6.5 A4.5 4.5 0 0 1 12.5 6.5 V11 H10 V6.7 A2 2 0 0 0 6 6.7 V11 Z" fill="#e3322a" stroke="#9a1a14" stroke-width=".7"/><rect x="3.5" y="9.5" width="2.5" height="1.8" fill="#eee"/><rect x="10" y="9.5" width="2.5" height="1.8" fill="#eee"/></svg>
<svg style="left:474.9px;top:29.2px" width="16" height="16" viewBox="0 0 16 16"><g stroke="#b7c2d8" stroke-width="1" fill="none"><path d="M1 4 H15 M1 12 H15 M2 1.5 V6.5 M14 1.5 V6.5 M2 9.5 V14.5 M14 9.5 V14.5"/></g><rect x="5" y="3" width="6" height="2" fill="#c5cfe2"/><rect x="5" y="11" width="6" height="2" fill="#c5cfe2"/></svg>
<svg style="left:500.6px;top:29.5px" width="16" height="16" viewBox="0 0 16 16"><rect x="1.5" y="1.5" width="13" height="13" fill="#2b64b2" stroke="#1a3f80" stroke-width="1"/><rect x="4.3" y="3.8" width="7.6" height="8.2" fill="#f2f6fd"/><path d="M6.3 5.2 V10.8 M9.8 5.2 L6.6 8 L10 10.8" stroke="#1a3f80" stroke-width="1.3" fill="none"/><path d="M1.5 14.5 H14.5 V1.5" stroke="#17345f" stroke-width="1.5" fill="none"/></svg>
<svg style="left:523.0px;top:29.2px" width="16" height="16" viewBox="0 0 16 16"><path d="M1.5 11 L9 4" stroke="#1d2a5a" stroke-width="1.5"/><path d="M9 1 L11.3 3.3 L9 5.6 L6.7 3.3 Z" fill="#f4f8ff" stroke="#1d2a5a" stroke-width="1"/><path d="M7.5 8.5 L14 14.5 M14 8.5 L7.5 14.5" stroke="#d8242a" stroke-width="2"/></svg>
<svg style="left:546.8px;top:29.2px" width="16" height="16" viewBox="0 0 16 16"><circle cx="11" cy="5" r="4.3" fill="#e8d070" stroke="#b89a30" stroke-width=".8"/><text x="8.8" y="7.8" font-family="Liberation Sans,sans-serif" font-size="7" font-weight="bold" fill="#fff">?</text><path d="M2 1.5 V12.5 L4.8 10 L7 14.8 L8.8 14 L6.6 9.3 L10 9 Z" fill="#e8f0ff" stroke="#14224a" stroke-width="1.1"/></svg>
<svg style="left:569.3px;top:28.2px" width="18" height="18" viewBox="0 0 18 18"><circle cx="9" cy="9" r="7.8" fill="#f0cf3a" stroke="#a8881a" stroke-width="1.1"/><circle cx="9" cy="9" r="6.4" fill="none" stroke="#fbeb8a" stroke-width="1"/><text x="9" y="13.4" text-anchor="middle" font-family="Liberation Sans,sans-serif" font-size="12.5" font-weight="bold" fill="#1a1a1a">?</text></svg>
<svg style="left:121.7px;top:58.2px" width="16" height="16" viewBox="0 0 16 16" transform="rotate(-18)"><path d="M4 9.5 L2 7 Q1.2 5.6 2.6 5.4 L5 7.5 V2.5 Q5.8 1.3 6.8 2.5 V6 V1.8 Q7.8 0.6 8.8 1.8 V6 V2.4 Q9.8 1.4 10.7 2.6 V6.5 V4 Q11.8 3 12.6 4.4 V10 Q12.5 13.5 10 14.8 H6.5 Q5 13 4 9.5 Z" fill="#f7faff" stroke="#2a4a8a" stroke-width="1"/></svg>
<svg style="left:146.0px;top:58.2px" width="16" height="16" viewBox="0 0 16 16"><path d="M3 2 V14" stroke="#a9b8d6" stroke-width="2"/><path d="M13 2.5 L5.5 8 L13 13.5 Z" fill="#cfdaf0" stroke="#a9b8d6" stroke-width="1.2"/></svg>
<svg style="left:172.0px;top:58.2px" width="16" height="16" viewBox="0 0 16 16"><path d="M9 2.5 L2 8 L9 13.5 Z" fill="#cfdaf0" stroke="#a9b8d6" stroke-width="1.2"/><path d="M11 2 V14 M14 2 V14" stroke="#a9b8d6" stroke-width="1.8"/></svg>
<svg style="left:192.6px;top:58.2px" width="16" height="16" viewBox="0 0 16 16"><path d="M2.2 2 V14 M5 2 V14" stroke="#2458a8" stroke-width="1.7"/><path d="M7.5 2.5 L14.5 8 L7.5 13.5 Z" fill="#bcd3f5" stroke="#2458a8" stroke-width="1.4"/></svg>
<svg style="left:217.8px;top:58.2px" width="16" height="16" viewBox="0 0 16 16"><path d="M2.5 2.5 L10 8 L2.5 13.5 Z" fill="#6a9ae0" stroke="#2458a8" stroke-width="1.4"/><path d="M12.5 2 V14" stroke="#2458a8" stroke-width="2.6"/></svg>
<svg style="left:281.9px;top:58.2px" width="16" height="16" viewBox="0 0 16 16"><rect x="1.5" y="2" width="13" height="12" fill="#f4e27a" stroke="#3a3a2a" stroke-width="1.3"/><rect x="3.5" y="4" width="9" height="8" fill="#fff6b0" stroke="#a08a20" stroke-width=".8"/><path d="M4.5 8 H7 V6 H9 V10 H11.5" stroke="#6a5a10" stroke-width="1" fill="none"/></svg>
<svg style="left:306.3px;top:58.2px" width="16" height="16" viewBox="0 0 16 16"><path d="M9.5 0.5 L4.5 5.8 L7.3 5.8 L4 10.5 L11.3 4.6 L8.2 4.6 L12 0.5 Z" fill="#e8442a" stroke="#b3261a" stroke-width=".5"/><rect x="1" y="11.5" width="14" height="3.6" fill="#1b7a33"/><rect x="5" y="12.6" width="6" height="1.4" fill="#e9fbe9"/></svg>
<svg style="left:329.9px;top:58.2px" width="16" height="16" viewBox="0 0 16 16"><rect x="1.5" y="2.5" width="11" height="11" fill="#f7e68a" stroke="#3a3a2a" stroke-width="1.3"/><path d="M7 3 V13 M2 8 H12.5" stroke="#8a6a10" stroke-width="1.2"/><path d="M14 1 V15" stroke="#3a3a4a" stroke-width="1.3"/><path d="M12.8 3 V13" stroke="#7a7a8a" stroke-width="1" stroke-dasharray="1 1"/></svg>
<div class="abs" style="left:544px;top:56px;width:22px;height:21px;background:#f6dca6;border:1px solid #3a3326"><i class="abs" style="left:3px;top:3px;width:14px;height:13px;background:#fff;border:1px solid #2a2f45;border-top:3px solid #2a3a6a"></i><i class="abs" style="left:3px;top:10px;width:14px;height:1px;background:#2a2f45"></i></div>
<div class="abs" style="left:568px;top:56px;width:22px;height:21px;background:#f6dca6;border:1px solid #3a3326"><i class="abs" style="left:3px;top:3px;width:14px;height:13px;background:#fff;border:1px solid #2a2f45;border-top:3px solid #2a3a6a"></i><i class="abs" style="left:12px;top:4px;width:1px;height:12px;background:#2a2f45"></i></div>
<svg style="left:613.6px;top:25.5px" width="28" height="20" viewBox="0 0 28 20"><rect x="1" y="1" width="26" height="18" fill="#e4eefb" stroke="#1d3560" stroke-width="1.5"/><path d="M1 13.5 H27 M17 13.5 V19" stroke="#1d3560" stroke-width="1.2"/><path d="M5 4 H11 V6 H17 V4 H20 V11 H5 Z" fill="#f7faff" stroke="#1d3560" stroke-width="1.3"/><path d="M23 3.5 V11" stroke="#1d3560" stroke-width="1.2" stroke-dasharray="2 1"/><path d="M3 15.5 H15 M3 17.3 H12 M19 15.5 H25 M19 17.3 H25" stroke="#5a7ab0" stroke-width=".9"/></svg>
<div class="abs" style="left:597.6px;top:45.0px;width:60px;text-align:center;font-size:8.8px;line-height:10px;color:#0f1838;text-shadow:0 0 .6px #0f1838;white-space:nowrap"><u>2</u>D CAD</div>
<svg style="left:673.0px;top:25.5px" width="28" height="20" viewBox="0 0 28 20" opacity=".85"><path d="M2 9 L14 2 L26 8 L14 16 Z" fill="#eef0f4" stroke="#b4bccb" stroke-width="1"/><path d="M2 9 V12 L14 19 L26 11 V8" fill="#d5dae4" stroke="#b4bccb" stroke-width="1"/><path d="M8 8.5 L14 5 L20 8 L14 11.5 Z" fill="#fbfbfd" stroke="#c4cad6" stroke-width=".8"/><path d="M6 10.5 L10 13 M18 12.5 L22 10" stroke="#c4cad6" stroke-width=".9"/></svg>
<div class="abs" style="left:657.0px;top:45.0px;width:60px;text-align:center;font-size:8.8px;line-height:10px;color:#9aa6c0;text-shadow:0 0 .6px #9aa6c0;white-space:nowrap"><u>3</u>D</div>
<svg width="0" height="0" style="left:0;top:0"><defs><linearGradient id="gp" x1="0" y1="0" x2="1" y2="1"><stop offset="0" stop-color="#2f6bb8"/><stop offset="1" stop-color="#b9d4f2"/></linearGradient><linearGradient id="gt" x1="0" y1="0" x2="1" y2="0"><stop offset="0" stop-color="#a9c6ef"/><stop offset="1" stop-color="#eef4fd"/></linearGradient></defs></svg>
<svg style="left:732.6px;top:25.5px" width="28" height="20" viewBox="0 0 28 20"><path d="M2 2 H12 V8 H26 V18.5 H2 Z" fill="url(#gp)" stroke="#3a6aa8" stroke-width=".8"/><rect x="12.5" y="8.5" width="13" height="7" fill="none" stroke="#1d3a6a" stroke-width="1.4"/><rect x="15" y="11" width="8" height="2.5" fill="#dce9fa" stroke="#3a6aa8" stroke-width=".6"/></svg>
<div class="abs" style="left:716.6px;top:45.0px;width:60px;text-align:center;font-size:8.8px;line-height:10px;color:#0f1838;text-shadow:0 0 .6px #0f1838;white-space:nowrap"><u>P</u>art</div>
<div class="sel" style="left:778.1px;top:22.8px;width:59px;height:36px;border-color:#15151a;background:linear-gradient(180deg,#fbc777,#f7b152 55%,#f9c47a)"></div>
<svg style="left:793.6px;top:25.5px" width="28" height="20" viewBox="0 0 28 20"><rect x="1" y="1" width="26" height="18" fill="#4a7aa6" stroke="#2a4a70" stroke-width="1"/><path d="M4 4 H12 V9 H8 V16 H4 Z" fill="#7aa2c8" stroke="#f2f6fb" stroke-width="1.1"/><path d="M14 3 H17 V12 H12 V16" fill="none" stroke="#f2f6fb" stroke-width="1.1"/><path d="M19 3 L25 3 L19 9 Z" fill="#9dbbd8" stroke="#e8eef6" stroke-width=".7"/><circle cx="21" cy="13" r="4" fill="#e8b27a" stroke="#f6f0e6" stroke-width="1"/><circle cx="21" cy="13" r="1.6" fill="#f8dcc0"/><path d="M1 17 H27" stroke="#25425f" stroke-width="2.4"/></svg>
<div class="abs" style="left:777.6px;top:45.0px;width:60px;text-align:center;font-size:8.8px;line-height:10px;color:#0f1838;text-shadow:0 0 .6px #0f1838;white-space:nowrap"><u>N</u>est</div>
<svg style="left:613.6px;top:65.0px" width="28" height="20" viewBox="0 0 28 20"><rect x="1" y="1" width="26" height="18" fill="#f4f8fe" stroke="#1d3560" stroke-width="1.4"/><path d="M1 3.5 H27" stroke="#8aa4cc" stroke-width="1.4"/><path d="M3.5 6.5 H10 M3.5 9 H9 M3.5 11.5 H10 M3.5 14 H8 M3.5 16.5 H10" stroke="#6a8ac0" stroke-width="1"/><rect x="13" y="6" width="12" height="11.5" fill="#a9c8ee" stroke="#2a4a80" stroke-width="1"/><path d="M16 8 V12 H19 V15.5 M23 8 L19.5 11.5 M23 15 L21 13" stroke="#1d3560" stroke-width="1.4" fill="none"/></svg>
<div class="abs" style="left:597.6px;top:84.5px;width:60px;text-align:center;font-size:8.8px;line-height:10px;color:#0f1838;text-shadow:0 0 .6px #0f1838;white-space:nowrap">Mo<u>d</u>ify</div>
<div class="sel" style="left:657.9px;top:62.3px;width:59px;height:36px;border-color:#15151a;background:linear-gradient(180deg,#fbc777,#f7b152 55%,#f9c47a)"></div>
<svg style="left:673.4px;top:65.0px" width="28" height="20" viewBox="0 0 28 20"><rect x="2" y="1.5" width="11" height="16.5" fill="url(#gt)" stroke="#1a2a4a" stroke-width="1.5"/><rect x="13" y="1.5" width="12" height="5.5" fill="#f0805a" stroke="#1a2a4a" stroke-width="1.4"/><rect x="13" y="7" width="12" height="11" fill="#f6a078" stroke="#1a2a4a" stroke-width="1.4"/><rect x="15.5" y="10.5" width="7" height="4.5" fill="#f7c9a8" stroke="#c84a2a" stroke-width="1"/></svg>
<div class="abs" style="left:657.4px;top:84.5px;width:60px;text-align:center;font-size:8.8px;line-height:10px;color:#0f1838;text-shadow:0 0 .6px #0f1838;white-space:nowrap"><u>T</u>ooling</div>
<svg style="left:732.6px;top:65.0px" width="28" height="20" viewBox="0 0 28 20"><rect x="1" y="1" width="26" height="18" fill="#5a8ac0" stroke="#2a4a80" stroke-width="1"/><path d="M1 12 L10 6 L16 10 L27 4 V19 H1 Z" fill="#86aedb"/><path d="M3 3 H25" stroke="#d8e6f6" stroke-width="1.2" stroke-dasharray="3 2"/><g stroke="#d4242a" stroke-width="1.8" fill="none"><path d="M6 15 V8 M3.6 10.5 L6 7.5 L8.4 10.5"/><path d="M11 6.5 H17 M14.8 4.4 L17.5 6.5 L14.8 8.6"/><path d="M22 6 V13 M19.6 10.8 L22 13.8 L24.4 10.8"/></g><rect x="9" y="11" width="8" height="5" fill="#dce8f8" stroke="#2a4a80" stroke-width=".8"/></svg>
<div class="abs" style="left:716.6px;top:84.5px;width:60px;text-align:center;font-size:8.8px;line-height:10px;color:#0f1838;text-shadow:0 0 .6px #0f1838;white-space:nowrap"><u>O</u>rder</div>
<svg style="left:793.0px;top:65.0px" width="28" height="20" viewBox="0 0 28 20"><rect x="2" y="1" width="24" height="18" fill="#f7faff" stroke="#c9d6ea" stroke-width=".8"/><g stroke="#2a5ea8" stroke-width="1.3"><path d="M7 3.5 H20 M9 6.7 H18 M7 9.9 H20 M9 13.1 H17 M7 16.3 H19"/></g><g stroke="#1d3560" stroke-width="1.6" stroke-dasharray="1.4 1.8"><path d="M3.6 1.5 V19 M24.4 1.5 V19"/></g><g stroke="#b8c8e0" stroke-width=".6"><path d="M5 5.1 H23 M5 8.3 H23 M5 11.5 H23 M5 14.7 H23"/></g></svg>
<div class="abs" style="left:777.0px;top:84.5px;width:60px;text-align:center;font-size:8.8px;line-height:10px;color:#0f1838;text-shadow:0 0 .6px #0f1838;white-space:nowrap"><u>C</u>ompile</div>
<svg style="left:852.4px;top:65.0px" width="28" height="20" viewBox="0 0 28 20"><rect x="2" y="1" width="24" height="18" fill="#f7faff" stroke="#c9d6ea" stroke-width=".8"/><g stroke="#2a5ea8" stroke-width="1.3"><path d="M7 3.5 H20 M9 6.7 H18 M7 9.9 H20 M9 13.1 H17 M7 16.3 H19"/></g><g stroke="#1d3560" stroke-width="1.6" stroke-dasharray="1.4 1.8"><path d="M3.6 1.5 V19 M24.4 1.5 V19"/></g><g stroke="#b8c8e0" stroke-width=".6"><path d="M5 5.1 H23 M5 8.3 H23 M5 11.5 H23 M5 14.7 H23"/></g><path d="M10.5 10.5 L14.5 16 L24 2.5" stroke="#c8202c" stroke-width="3.2" fill="none" stroke-linejoin="miter"/></svg>
<div class="abs" style="left:836.4px;top:84.5px;width:60px;text-align:center;font-size:8.8px;line-height:10px;color:#0f1838;text-shadow:0 0 .6px #0f1838;white-space:nowrap">Verif<u>y</u></div>
<svg style="left:912.4px;top:65.0px" width="28" height="20" viewBox="0 0 28 20"><rect x="2" y="1" width="24" height="18" fill="#f7faff" stroke="#c9d6ea" stroke-width=".8"/><g stroke="#2a5ea8" stroke-width="1.3"><path d="M7 3.5 H20 M9 6.7 H18 M7 9.9 H20 M9 13.1 H17 M7 16.3 H19"/></g><g stroke="#1d3560" stroke-width="1.6" stroke-dasharray="1.4 1.8"><path d="M3.6 1.5 V19 M24.4 1.5 V19"/></g><g stroke="#b8c8e0" stroke-width=".6"><path d="M5 5.1 H23 M5 8.3 H23 M5 11.5 H23 M5 14.7 H23"/></g><path d="M9 17 L15.5 10.5" stroke="#e6c22a" stroke-width="2.4"/><circle cx="19" cy="6.5" r="5.3" fill="#8fc0f0" stroke="#2a5ea8" stroke-width="1.6"/><circle cx="17.8" cy="5.2" r="2" fill="#d8ecff"/></svg>
<div class="abs" style="left:896.4px;top:84.5px;width:60px;text-align:center;font-size:8.8px;line-height:10px;color:#0f1838;text-shadow:0 0 .6px #0f1838;white-space:nowrap"><u>B</u>locks</div>
<svg style="left:1343.6px;top:128.8px" width="16" height="16" viewBox="0 0 16 16" opacity=".8"><path d="M1.5 14.5 L3 11 L11 3.5 L13 5.5 L5 13 Z" fill="#c3cbda" stroke="#a4aebf" stroke-width=".9"/><circle cx="7.5" cy="4.5" r="3" fill="#e8eef8" stroke="#a4aebf" stroke-width="1.1"/><path d="M11.5 1.5 L14.5 3 L12.5 5" stroke="#a4aebf" stroke-width="1" fill="none"/></svg>
<svg style="left:1368.0px;top:128.8px" width="16" height="16" viewBox="0 0 16 16" opacity=".8"><path d="M2 2.5 L14 13.5 M14 2.5 L2 13.5" stroke="#8e9ab2" stroke-width="1.6"/></svg>
<svg style="left:1392.4px;top:128.8px" width="16" height="16" viewBox="0 0 16 16" opacity=".8"><rect x="2" y="5" width="12" height="9.5" fill="#e6e9f0" stroke="#c2c8d4" stroke-width="1"/><path d="M2 8 H14 M6 8 V14.5 M10 8 V14.5 M2 11 H14" stroke="#cdd2dc" stroke-width="1"/><path d="M5 4 Q9 0.5 13.5 2.5" stroke="#c2c8d4" stroke-width="1.6" fill="none"/></svg>
<svg style="left:1416.8px;top:128.8px" width="16" height="16" viewBox="0 0 16 16" opacity=".8"><path d="M6 4 L9 4.5 L10.5 1.5 L14 2 L13.5 10.5 L5 11.5 Z" fill="#9aa0ac" stroke="#8a909c" stroke-width=".8"/><path d="M1.5 15 L6.5 10" stroke="#9aa0ac" stroke-width="1.6"/></svg>
<svg style="left:1441.0px;top:129.0px" width="16" height="16" viewBox="0 0 16 16"><path d="M4 2.5 V7.5 M5 9.5 L11.5 4 M6.5 13 H13.5" stroke="#2d4a12" stroke-width="1.9"/></svg>
<svg style="left:1464.4px;top:129.2px" width="16" height="16" viewBox="0 0 16 16"><rect x="1" y="1.5" width="14" height="12.5" fill="#f6f9ff" stroke="#2a5a9a" stroke-width="1.3"/><path d="M1 2.3 H15" stroke="#2a5a9a" stroke-width="1.8"/><rect x="3.5" y="5" width="3" height="2.5" fill="#d86a4a"/><rect x="3.5" y="9.5" width="3" height="2.5" fill="#d86a4a"/><path d="M8 6.2 H13 M8 10.7 H13" stroke="#8aa0c8" stroke-width="1.2"/></svg>
<svg style="left:1485.3px;top:136.0px" width="7" height="4" viewBox="0 0 7 4"><path d="M0 0 H7 L3.5 4 Z" fill="#111"/></svg>
<svg style="left:1498.4px;top:129.2px" width="16" height="16" viewBox="0 0 16 16"><rect x="1" y="1.5" width="14" height="12.5" fill="#f6f9ff" stroke="#2a5a9a" stroke-width="1.3"/><path d="M1 2.3 H15" stroke="#2a5a9a" stroke-width="1.8"/><path d="M3 5.5 H6 M8 5.5 H10 M11.5 5.5 H13.5 M3 8.3 H6.5 M8 8.3 H10 M11.5 8.3 H13.5 M3 11 H6 M8 11 H10 M11.5 11 H13.5" stroke="#3a5a90" stroke-width="1"/></svg>
<svg style="left:1519.4px;top:136.0px" width="7" height="4" viewBox="0 0 7 4"><path d="M0 0 H7 L3.5 4 Z" fill="#111"/></svg>
<svg style="left:1344.0px;top:154.4px" width="16" height="16" viewBox="0 0 16 16" opacity=".8"><rect x="2" y="6" width="12" height="8.5" fill="#f2f4f8" stroke="#c2c8d4" stroke-width="1"/><path d="M2 9 H14" stroke="#d5d9e2" stroke-width="1"/><path d="M3 6 L8 2 L13.5 3.5 V7" fill="#b9c0cc" stroke="#aab2c0" stroke-width=".8"/><rect x="8" y="10" width="5" height="2.4" fill="#dfe3ea"/></svg>
<svg style="left:126.6px;top:736.4px" width="16" height="16" viewBox="0 0 16 16"><rect x="1.5" y="3.5" width="12" height="9.5" fill="#f4f8ff" stroke="#15203a" stroke-width="1.5"/><path d="M3 11.5 H12" stroke="#5a6a8a" stroke-width="1" stroke-dasharray="1 1"/><path d="M12.5 0.5 L13.3 2.7 L15.5 3.5 L13.3 4.3 L12.5 6.5 L11.7 4.3 L9.5 3.5 L11.7 2.7 Z" fill="#e8e84a" stroke="#b8b020" stroke-width=".4"/></svg>
<svg style="left:150.6px;top:736.4px" width="16" height="16" viewBox="0 0 16 16"><rect x="4" y="3" width="10" height="8.5" fill="#f4f8ff" stroke="#15203a" stroke-width="1.5"/><path d="M1.5 2 V13 M4 14.5 H14" stroke="#15203a" stroke-width="1.4"/><path d="M5.5 10 H13" stroke="#5a6a8a" stroke-width="1" stroke-dasharray="1 1"/><path d="M12.5 0.5 L13.3 2.7 L15.5 3.5 L13.3 4.3 L12.5 6.5 L11.7 4.3 L9.5 3.5 L11.7 2.7 Z" fill="#e8e84a" stroke="#b8b020" stroke-width=".4"/></svg>
<svg style="left:175.6px;top:736.4px" width="16" height="16" viewBox="0 0 16 16"><rect x="2" y="7.5" width="11.5" height="7" fill="#f4f8ff" stroke="#15203a" stroke-width="1.5"/><path d="M3.5 13 H12.5" stroke="#3a4a6a" stroke-width="1.4" stroke-dasharray="1 1"/><path d="M10.5 0.3 L6 5 L8.6 5 L5.5 9.3 L12.5 4 L9.6 4 L13 0.3 Z" fill="#e8502a" stroke="#a8301a" stroke-width=".5"/><path d="M9.5 1.5 L7.8 4" stroke="#ffd24a" stroke-width=".9"/></svg>
<svg style="left:200.1px;top:736.4px" width="16" height="16" viewBox="0 0 16 16" opacity=".8"><rect x="1.5" y="4" width="8" height="7" fill="#eef0f5" stroke="#b9c0cf" stroke-width="1"/><rect x="5" y="7" width="9" height="7.5" fill="#f2f4f8" stroke="#b9c0cf" stroke-width="1"/><path d="M5 8 L9.5 11 L14 8" stroke="#c5cbd8" stroke-width="1" fill="none"/><path d="M6 3 Q9 0.5 12 3" stroke="#c5cbd8" stroke-width="1.4" fill="none"/></svg>
<svg style="left:222.9px;top:736.4px" width="16" height="16" viewBox="0 0 16 16" opacity=".8"><path d="M2 2.5 L14 13.5 M14 2.5 L2 13.5" stroke="#8e9ab2" stroke-width="1.6"/></svg>
<svg style="left:246.9px;top:736.4px" width="16" height="16" viewBox="0 0 16 16" opacity=".8"><path d="M3.5 1.5 H9.5 L13 5 V14.5 H3.5 Z" fill="#eef1f7" stroke="#c5cbd8" stroke-width="1"/><path d="M9.5 1.5 V5 H13" fill="none" stroke="#c5cbd8" stroke-width="1"/></svg>
<svg style="left:270.7px;top:736.4px" width="16" height="16" viewBox="0 0 16 16"><rect x="1.5" y="5.5" width="13" height="9.5" fill="#e8c64a" stroke="#2a3a5a" stroke-width="1.3"/><rect x="3.5" y="7.5" width="9" height="5.5" fill="#f4e28a" stroke="#8a6a1a" stroke-width=".8"/><path d="M5 12 V9 L8 11.5 L11 9 V12" stroke="#3a5a8a" stroke-width="1" fill="none"/><path d="M10.5 0.3 L6 5 L8.6 5 L5.5 9.3 L12.5 4 L9.6 4 L13 0.3 Z" fill="#e8502a" stroke="#a8301a" stroke-width=".5"/><path d="M9.5 1.5 L7.8 4" stroke="#ffd24a" stroke-width=".9"/></svg>
<svg style="left:311.6px;top:736.6px" width="16" height="16" viewBox="0 0 16 16"><rect x="1" y="1.5" width="14" height="12.5" fill="#f6f9ff" stroke="#2a5a9a" stroke-width="1.3"/><path d="M1 2.3 H15" stroke="#2a5a9a" stroke-width="1.8"/><rect x="3.5" y="5" width="3" height="2.5" fill="#d86a4a"/><rect x="3.5" y="9.5" width="3" height="2.5" fill="#d86a4a"/><path d="M8 6.2 H13 M8 10.7 H13" stroke="#8aa0c8" stroke-width="1.2"/></svg>
<svg style="left:332.4px;top:743.5px" width="7" height="4" viewBox="0 0 7 4"><path d="M0 0 H7 L3.5 4 Z" fill="#111"/></svg>
<svg style="left:346.3px;top:736.6px" width="16" height="16" viewBox="0 0 16 16"><rect x="1" y="1.5" width="14" height="12.5" fill="#f6f9ff" stroke="#2a5a9a" stroke-width="1.3"/><path d="M1 2.3 H15" stroke="#2a5a9a" stroke-width="1.8"/><path d="M3 5.5 H6 M8 5.5 H10 M11.5 5.5 H13.5 M3 8.3 H6.5 M8 8.3 H10 M11.5 8.3 H13.5 M3 11 H6 M8 11 H10 M11.5 11 H13.5" stroke="#3a5a90" stroke-width="1"/></svg>
<svg style="left:366.5px;top:743.5px" width="7" height="4" viewBox="0 0 7 4"><path d="M0 0 H7 L3.5 4 Z" fill="#111"/></svg>
<div class="abs" style="left:124px;top:790.5px;width:15px;height:5px;border:1.4px solid #111;background:#fff"></div>
<svg style="left:144px;top:790px" width="14" height="10" viewBox="0 0 14 10"><path d="M0.6 0.5 V9.3 H13.4 V0.5" fill="none" stroke="#555" stroke-width="1"/><rect x="2" y="5" width="10" height="3.4" fill="#cfcfcf" stroke="#8a8a8a" stroke-width=".7"/></svg>
<svg style="left:1344.6px;top:207.0px" width="8" height="8" viewBox="0 0 8 8"><circle cx="4" cy="4" r="2.4" fill="#f4fff4" stroke="#3fbf4f" stroke-width="1.3"/></svg>
<svg style="left:1344.6px;top:223.2px" width="8" height="8" viewBox="0 0 8 8"><circle cx="4" cy="4" r="2.4" fill="#f4fff4" stroke="#3fbf4f" stroke-width="1.3"/></svg>
<svg style="left:1344.6px;top:239.3px" width="8" height="8" viewBox="0 0 8 8"><circle cx="4" cy="4" r="1.2" fill="#8fe09a"/></svg>
<div class="abs" style="left:1343px;top:253px;width:13px;height:12px;border:1px solid #3aa84a;background:#f4fff4"><i class="abs" style="left:1px;top:3.5px;width:9px;height:3px;background:#111"></i></div>
<svg style="left:1483.3px;top:206.0px" width="10" height="10" viewBox="0 0 10 10"><path d="M5 0.5 V9.5 M0.5 5 H9.5 M1.8 1.8 L8.2 8.2 M8.2 1.8 L1.8 8.2" stroke="#111" stroke-width="1"/></svg>
<svg style="left:1483.3px;top:222.2px" width="10" height="10" viewBox="0 0 10 10"><path d="M5 0.5 V9.5 M0.5 5 H9.5 M1.8 1.8 L8.2 8.2 M8.2 1.8 L1.8 8.2" stroke="#111" stroke-width="1"/></svg>
<svg style="left:1483.3px;top:238.4px" width="10" height="10" viewBox="0 0 10 10"><path d="M5 0.5 V9.5 M0.5 5 H9.5 M1.8 1.8 L8.2 8.2 M8.2 1.8 L1.8 8.2" stroke="#111" stroke-width="1"/></svg>
<svg style="left:1483.3px;top:254.3px" width="10" height="10" viewBox="0 0 10 10"><path d="M5 0.5 V9.5 M0.5 5 H9.5" stroke="#111" stroke-width="1"/></svg>
<svg style="left:1579px;top:254px" width="11" height="11" viewBox="0 0 11 11"><path d="M0.8 10 L10 1" stroke="#333" stroke-width=".9"/></svg>
<svg style="left:120px;top:924px" width="14" height="14" viewBox="0 0 14 14"><path d="M0.5 5 H13.5 M8.5 0.5 V13.5 M8.5 5 L1.5 11.5" stroke="#222" stroke-width="1.1" fill="none"/></svg>
<svg style="left:277px;top:924px" width="14" height="14" viewBox="0 0 14 14"><circle cx="9.5" cy="5" r="2.6" fill="none" stroke="#222" stroke-width="1.1"/><path d="M1 11.5 H5 M3 9.5 V13.5" stroke="#222" stroke-width="1.1"/></svg>
</body>
</html>
